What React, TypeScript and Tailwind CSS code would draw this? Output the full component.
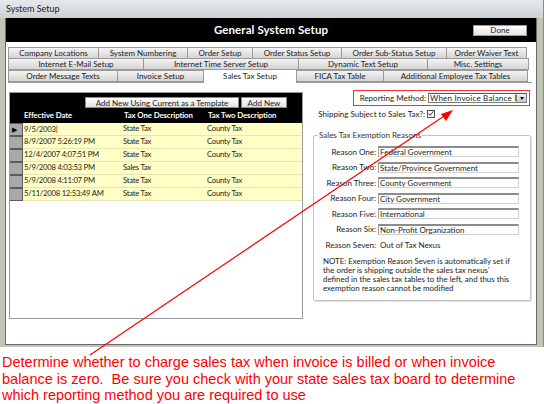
import React from 'react';

const tabRows: { label: string; w: string; active?: boolean }[][] = [
  [
    { label: 'Company Locations', w: 'w-[91px]' },
    { label: 'System Numbering', w: 'w-[90px]' },
    { label: 'Order Setup', w: 'w-[66px]' },
    { label: 'Order Status Setup', w: 'w-[90px]' },
    { label: 'Order Sub-Status Setup', w: 'w-[106px]' },
    { label: 'Order Waiver Text', w: 'w-[81px]' },
  ],
  [
    { label: 'Internet E-Mail Setup', w: 'w-[136px]' },
    { label: 'Internet Time Server Setup', w: 'w-[156px]' },
    { label: 'Dynamic Text Setup', w: 'w-[130px]' },
    { label: 'Misc. Settings', w: 'w-[102px]' },
  ],
  [
    { label: 'Order Message Texts', w: 'w-[110px]' },
    { label: 'Invoice Setup', w: 'w-[87px]' },
    { label: 'Sales Tax Setup', w: 'w-[94px]', active: true },
    { label: 'FICA Tax Table', w: 'w-[88px]' },
    { label: 'Additional Employee Tax Tables', w: 'w-[145px]' },
  ],
];

const rates = [
  { date: '9/5/2003', one: 'State Tax', two: 'County Tax' },
  { date: '8/9/2007 5:26:19 PM', one: 'State Tax', two: 'County Tax' },
  { date: '12/4/2007 4:07:51 PM', one: 'State Tax', two: 'County Tax' },
  { date: '5/9/2008 4:03:53 PM', one: 'Sales Tax', two: '' },
  { date: '5/9/2008 4:11:07 PM', one: 'State Tax', two: 'County Tax' },
  { date: '5/11/2008 12:53:49 AM', one: 'State Tax', two: 'County Tax' },
];

const reasons = [
  ['Reason One:', 'Federal Government'],
  ['Reason Two:', 'State/Province Government'],
  ['Reason Three:', 'County Government'],
  ['Reason Four:', 'City Government'],
  ['Reason Five:', 'International'],
  ['Reason Six:', 'Non-Profit Organization'],
];

function Tab({ label, w, active }: { label: string; w: string; active?: boolean }) {
  if (active) {
    return (
      <div className={`${w} shrink-0 h-[14px] -mb-[1px] -ml-[1px] bg-white border border-b-0 border-[#9a9a9a] flex items-start justify-center pt-[1px] text-[8px] leading-[10px] text-[#222]`}>
        {label}
      </div>
    );
  }
  return (
    <div className={`${w} shrink-0 h-[12px] bg-linear-to-b from-[#f4f4f4] to-[#d4d4d4] border border-[#9a9a9a] -ml-[1px] first:ml-0 flex items-center justify-center text-[8px] leading-none text-[#222]`}>
      {label}
    </div>
  );
}

function GrayButton({ children, w }: { children: React.ReactNode; w: string }) {
  return (
    <div className={`${w} shrink-0 h-[11px] bg-linear-to-b from-white to-[#e2e2e2] border border-[#8c8c8c] flex items-center justify-center text-[8px] leading-none text-[#222]`}>
      {children}
    </div>
  );
}

export default function App() {
  return (
    <div className="w-[544px] h-[404px] bg-white relative overflow-hidden font-['Lato',sans-serif] text-[#1c1c1c]">
      {/* window */}
      <div className="h-[347px] flex flex-col bg-[#c2c4b6] border-r border-[#8c8c84]">
        <div className="h-[18px] bg-linear-to-b from-[#e6e9ec] to-[#cdd1d6] flex items-center pl-[6px] text-[9px] text-[#222]">
          System Setup
        </div>
        <div className="flex-1 flex pl-[5px] pr-[6px] pb-[2px]">
          <div className="flex-1 flex flex-col bg-white border-x border-b border-[#6a6a6a]">
            {/* header */}
            <div className="h-[24px] bg-black grid grid-cols-[1fr_auto_1fr] items-center">
              <div />
              <div className="text-white font-bold text-[11.5px] leading-none tracking-[0.1px]">General System Setup</div>
              <div className="flex justify-end pr-[9px]">
                <div className="w-[54px] h-[11px] bg-linear-to-b from-white to-[#e4e4e4] border border-[#9a9a9a] flex items-center justify-center text-[8px] leading-none text-[#222]">
                  Done
                </div>
              </div>
            </div>

            {/* tabs */}
            <div className="pt-[5px] pl-[2px] flex flex-col">
              {tabRows.map((row, i) => (
                <div key={i} className={`flex ${i === 2 ? 'items-end border-b border-[#9a9a9a] mr-[4px]' : ''} ${i > 0 ? '-mt-[1px]' : ''}`}>
                  {row.map((t) => (
                    <Tab key={t.label} {...t} />
                  ))}
                </div>
              ))}
            </div>

            {/* content */}
            <div className="flex-1 flex">
              {/* datasheet */}
              <div className="ml-[3px] mt-[9px] w-[294px] h-[227px] shrink-0 border border-[#9a9a9a] flex flex-col">
                <div className="h-[30px] bg-black flex flex-col">
                  <div className="flex pl-[75px] pt-[4px] gap-[2px]">
                    <GrayButton w="w-[154px]">Add New Using Current as a Template</GrayButton>
                    <GrayButton w="w-[46px]">Add New</GrayButton>
                  </div>
                  <div className="flex pl-[13px] pt-[4px] text-white font-bold text-[7.8px] leading-none tracking-[-0.1px]">
                    <div className="w-[101px] shrink-0 pl-[1px]">Effective Date</div>
                    <div className="w-[84px] shrink-0">Tax One Description</div>
                    <div>Tax Two Description</div>
                  </div>
                </div>
                {rates.map((r, i) => (
                  <div key={i} className="h-[13px] flex text-[7.7px] leading-none tracking-[-0.25px]">
                    <div className="w-[13px] shrink-0 bg-[#a9a9a9] border-y border-r border-[#5c5c5c] flex items-center pl-[2px]">
                      {i === 0 && <span className="text-[7px] leading-none text-black">▶</span>}
                    </div>
                    <div className="flex-1 flex items-center bg-[#ffffc6] border-b border-[#e6e6b4]">
                      <div className="w-[100px] shrink-0 pl-[1px]">{r.date}{i === 0 && <span className="text-[8px]">|</span>}</div>
                      <div className="w-[84px] shrink-0">{r.one}</div>
                      <div>{r.two}</div>
                    </div>
                  </div>
                ))}
              </div>

              {/* right side */}
              <div className="flex-1 flex flex-col pt-[7px] text-[8px] leading-none">
                <div className="ml-[50px] w-[177px] h-[16px] border-[1.5px] border-[#ee3333] flex items-center">
                  <div className="w-[73px] text-right pr-[1px]">Reporting Method:</div>
                  <div className="ml-[1px] w-[99px] h-[10px] border border-[#7a7a7a] border-t-[#5a5a5a] flex items-center bg-white">
                    <div className="flex-1 pl-[1px] overflow-hidden whitespace-nowrap text-[8px] tracking-[0.2px]">When Invoice Balance Is</div>
                    <div className="w-[10px] h-full bg-linear-to-b from-[#f0f0f0] to-[#c8c8c8] border-l border-[#8a8a8a] flex items-center justify-center">
                      <div className="w-0 h-0 border-x-[2.5px] border-x-transparent border-t-[3px] border-t-black" />
                    </div>
                  </div>
                </div>
                <div className="flex items-center mt-[3px] h-[9px]">
                  <div className="w-[123px] text-right pr-[1px]">Shipping Subject to Sales Tax?:</div>
                  <div className="ml-[1px] w-[8px] h-[8px] border border-[#555] bg-white flex items-center justify-center">
                    <svg viewBox="0 0 8 8" className="w-[7px] h-[7px]">
                      <path d="M1 4 L3 6.5 L7 1" fill="none" stroke="#111" strokeWidth="1.2" />
                    </svg>
                  </div>
                </div>

                <fieldset className="ml-[10px] mt-[13px] w-[218px] h-[170px] border border-[#c4c4c4] rounded-[2px] shadow-[1px_1px_0_#e0e0e0]">
                  <legend className="ml-[4px] px-[1px] text-[8px] leading-none text-[#333]">Sales Tax Exemption Reasons</legend>
                  <div className="flex flex-col gap-[4.6px] pt-[7px]">
                    {reasons.map(([label, value]) => (
                      <div key={label} className="flex items-center h-[11px]">
                        <div className="w-[62px] text-right">{label}</div>
                        <div className="ml-[2px] w-[141px] h-[11px] bg-white border border-[#d0d0d0] border-t-[2px] border-t-[#8c8c8c] border-l-[#a0a0a0] flex items-center pl-[1px]">
                          {value}
                        </div>
                      </div>
                    ))}
                    <div className="flex items-center h-[11px]">
                      <div className="w-[62px] text-right">Reason Seven:</div>
                      <div className="ml-[4px]">Out of Tax Nexus</div>
                    </div>
                  </div>
                  <p className="pl-[9px] pt-[6px] text-[7.9px] leading-[9.2px] whitespace-nowrap">
                    NOTE: Exemption Reason Seven is automatically set if
                    <br />
                    the order is shipping outside the sales tax nexus'
                    <br />
                    defined in the sales tax tables to the left, and thus this
                    <br />
                    exemption reason cannot be modified
                  </p>
                </fieldset>
              </div>
            </div>
          </div>
        </div>
      </div>

      {/* annotation */}
      <div className="pt-[7px] pl-[2px] font-['Liberation_Sans',sans-serif] text-[14.5px] leading-[16.5px] text-[#ff0000]">
        Determine whether to charge sales tax when invoice is billed or when invoice
        <br />
        balance is zero.&nbsp; Be sure you check with your state sales tax board to determine
        <br />
        which reporting method you are required to use
      </div>

      <svg className="absolute inset-0 pointer-events-none" width="544" height="404" viewBox="0 0 544 404">
        <line x1="90" y1="355" x2="450" y2="112" stroke="#ff0000" strokeWidth="1.2" />
        <polygon points="453,110 441,114 446,121" fill="#ff0000" />
      </svg>
    </div>
  );
}
